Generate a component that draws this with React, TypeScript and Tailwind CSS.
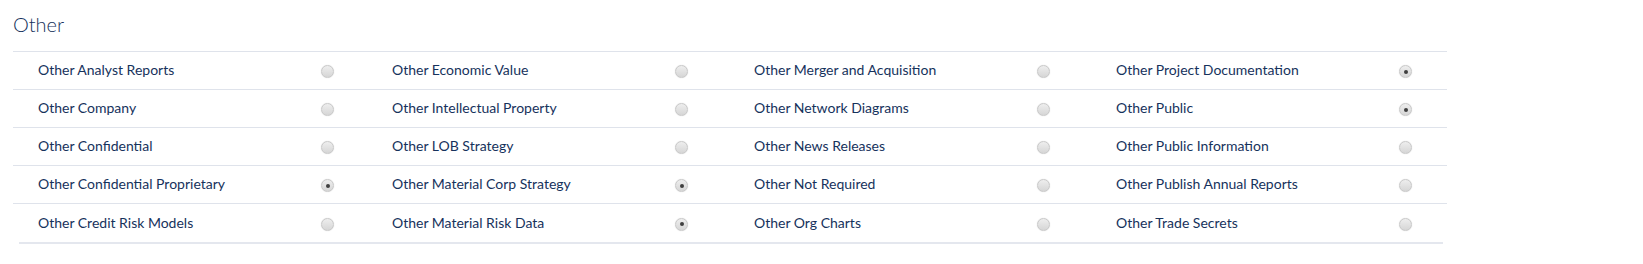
const columns: { label: string; checked: boolean }[][] = [
  [
    { label: "Other Analyst Reports", checked: false },
    { label: "Other Company", checked: false },
    { label: "Other Confidential", checked: false },
    { label: "Other Confidential Proprietary", checked: true },
    { label: "Other Credit Risk Models", checked: false },
  ],
  [
    { label: "Other Economic Value", checked: false },
    { label: "Other Intellectual Property", checked: false },
    { label: "Other LOB Strategy", checked: false },
    { label: "Other Material Corp Strategy", checked: true },
    { label: "Other Material Risk Data", checked: true },
  ],
  [
    { label: "Other Merger and Acquisition", checked: false },
    { label: "Other Network Diagrams", checked: false },
    { label: "Other News Releases", checked: false },
    { label: "Other Not Required", checked: false },
    { label: "Other Org Charts", checked: false },
  ],
  [
    { label: "Other Project Documentation", checked: true },
    { label: "Other Public", checked: true },
    { label: "Other Public Information", checked: false },
    { label: "Other Publish Annual Reports", checked: false },
    { label: "Other Trade Secrets", checked: false },
  ],
];

function Radio({ checked }: { checked: boolean }) {
  return (
    <span className="w-[13px] h-[13px] mt-[2px] rounded-full border border-[#c9c9c9] bg-gradient-to-b from-[#eeeeee] to-[#d6d6d6] shadow-[0_0_1px_rgba(0,0,0,0.2)] flex items-center justify-center shrink-0">
      {checked && <span className="w-[4px] h-[4px] rounded-full bg-[#3f3f3f]" />}
    </span>
  );
}

export default function App() {
  const rows = [0, 1, 2, 3, 4];
  return (
    <div className="w-[1643px] h-[264px] bg-white font-['Lato','Open_Sans',sans-serif] text-[#16325c]">
      {/* section title */}
      <div className="pt-[10px] pl-[13px] h-[51px]">
        <h2 className="text-[20px] leading-[28px] font-light">Other</h2>
      </div>

      {/* table */}
      <div className="ml-[13px] w-[1434px] border-t border-[#dfe3eb]">
        {rows.map((r) => (
          <div
            key={r}
            className={
              r < 4
                ? "grid grid-cols-[354px_362px_362px_356px] h-[38px] border-b border-[#dfe3eb]"
                : "grid grid-cols-[354px_362px_362px_356px] h-[38px]"
            }
          >
            {columns.map((col, c) => (
              <div key={c} className="flex items-center pl-[25px]">
                <span className="w-[283px] text-[14px] leading-[16px] pb-[1px]">{col[r].label}</span>
                <Radio checked={col[r].checked} />
              </div>
            ))}
          </div>
        ))}
      </div>
      <div className="ml-[19px] w-[1424px] h-[2px] bg-[#e4e7ee]" />
    </div>
  );
}
